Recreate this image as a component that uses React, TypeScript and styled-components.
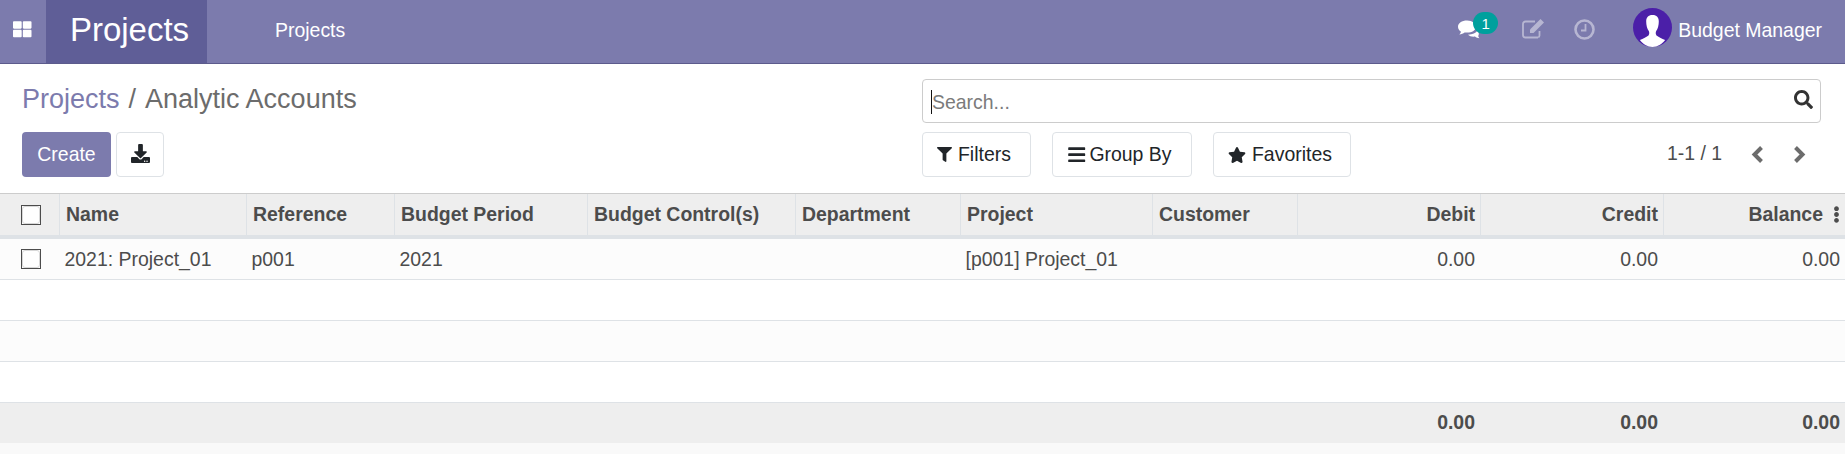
import React from "react";
import styled, { createGlobalStyle } from "styled-components";
import { FaThLarge, FaSearch, FaDownload, FaFilter, FaBars, FaStar, FaEllipsisV } from "react-icons/fa";

const Global = createGlobalStyle`
  html, body { margin: 0; padding: 0; background: #f9f9f9; }
  body { width: 1845px; height: 454px; overflow: hidden; font-family: "Liberation Sans", Arial, sans-serif; font-size: 19.44px; color: #4c4c4c; }
`;
const Navbar = styled.header`
  display: flex; align-items: stretch; height: 64px; box-sizing: border-box; background: #7c7bad; border-bottom: 1px solid #5c5b8c; color: #fff;
`;
const AppsToggle = styled.div`
  width: 46px; box-sizing: border-box; padding: 0 1px 5px 0; display: flex; align-items: center; justify-content: center; font-size: 18.5px;
`;
const Brand = styled.div`
  width: 161px; background: #5f5e97; display: flex; align-items: center; justify-content: center; font-size: 33px; padding: 0 0 3px 6px; box-sizing: border-box;
`;
const MenuItem = styled.div`
  margin-left: 68px; display: flex; align-items: center; padding-bottom: 3px;
`;
const Systray = styled.div`
  margin-left: auto; display: flex; align-items: center; padding-right: 23px;
`;
const TrayIcon = styled.span<{ $gap: number }>`
  position: relative; display: flex; margin-right: ${p => p.$gap}px; margin-bottom: 5px;
`;
const TrayGlyph = styled.svg<{ $w: number }>`
  width: ${p => p.$w}px; height: 24px; display: block;
`;
const Badge = styled.span`
  position: absolute; left: 16px; top: -5px; width: 25px; height: 22px; border-radius: 11px; background: #00a09d; color: #fff; font-size: 15px; display: flex; align-items: center; justify-content: center;
`;
const Avatar = styled.svg`
  width: 39px; height: 39px; margin-right: 6px; margin-bottom: 8px; display: block;
`;
const UserName = styled.span`
  padding-bottom: 3px;
`;
const ControlPanel = styled.section`
  display: grid; grid-template-columns: 900px 899px; padding: 15px 24px 0 22px; background: #fff; height: 130px; box-sizing: border-box; border-bottom: 1px solid #ccc;
`;
const LeftPanel = styled.div`
  display: flex; flex-direction: column;
`;
const Breadcrumb = styled.div`
  font-size: 27px; height: 40px; color: #6c6c6c; display: flex; gap: 9px; align-items: center; margin-bottom: 13px;
`;
const Crumb = styled.span`
  color: #7c7bad;
`;
const ButtonRow = styled.div`
  display: flex; gap: 5px;
`;
const PrimaryButton = styled.button`
  width: 89px; height: 45px; border: 0; border-radius: 4px; background: #7c7bad; color: #fff; font: inherit; padding: 0;
`;
const IconButton = styled.button`
  width: 48px; height: 45px; border: 1px solid #dee2e6; border-radius: 4px; background: #fff; color: #212529; font-size: 19px; padding: 0 0 2px; display: flex; align-items: center; justify-content: center;
`;
const RightPanel = styled.div`
  display: flex; flex-direction: column; gap: 9px;
`;
const SearchBox = styled.div`
  height: 44px; box-sizing: border-box; border: 1px solid #ccc; border-radius: 4px; display: flex; align-items: center; padding: 0 7px 0 8px; color: #7b7b7b; justify-content: space-between;
`;
const Caret = styled.span`
  border-left: 1px solid #111; height: 24px; margin-top: 2px; display: flex; align-items: center; white-space: nowrap; line-height: 24px;
`;
const SearchIcon = styled.span`
  color: #333; font-size: 19px; display: flex; margin-bottom: 3px;
`;
const FilterRow = styled.div`
  display: flex; align-items: center;
`;
const FilterButton = styled.button<{ $w: number; $gap: number; $left: number }>`
  width: ${p => p.$w}px; height: 45px; margin-right: 21px; border: 1px solid #dee2e6; border-radius: 4px; background: #fff; color: #212529; font: inherit; display: flex; align-items: center; gap: ${p => p.$gap}px; padding: 0 0 0 ${p => p.$left}px;
`;
const FilterGlyph = styled.span<{ $size: number }>`
  display: flex; font-size: ${p => p.$size}px;
`;
const Pager = styled.div`
  margin-left: auto; display: flex; align-items: center; padding-right: 15px; color: #4c4c4c;
`;
const PagerText = styled.span`
  margin: 0 29px 2px 0;
`;
const PagerArrow = styled.svg<{ $gap?: number }>`
  width: 13px; height: 19px; display: block; margin-left: ${p => p.$gap ?? 0}px;
`;
const Table = styled.table`
  width: 1845px; table-layout: fixed; border-collapse: separate; border-spacing: 0; background: #fff;
`;
const Th = styled.th<{ $right?: boolean }>`
  height: 45px; padding: 0 5px 0 6px; box-sizing: border-box; background: #eee; font-weight: 700; text-align: ${p => (p.$right ? "right" : "left")}; border-right: 1px solid #dee2e6; white-space: nowrap; border-bottom: 4px solid #dee2e6;
  &:last-child { border-right: 0; padding-right: 0; }
`;
const Tr = styled.tr<{ $odd?: boolean }>`
  background: ${p => (p.$odd ? "#fcfcfc" : "#fff")};
`;
const Td = styled.td<{ $right?: boolean }>`
  height: 41px; padding: 0 6px 0 4.5px; box-sizing: border-box; text-align: ${p => (p.$right ? "right" : "left")}; border-bottom: 1px solid #dee2e6; white-space: nowrap;
  &:last-child { padding-right: 5px; }
`;
const FootCell = styled.td`
  height: 40px; padding: 0 6px 2px 5px; box-sizing: border-box; background: #eee; font-weight: 700; text-align: right;
  &:last-child { padding-right: 5px; }
`;
const Check = styled.span<{ $left: number }>`
  display: block; box-sizing: border-box; width: 20px; height: 20px; margin-left: ${p => p.$left}px; border: 1px solid #4c4c4c; background: #fff;
  &::before { content: ""; display: block; width: 18px; height: 18px; box-sizing: border-box; border: 1px solid #d8d8d8; border-radius: 3px; }
`;
const CheckCell = styled.div`
  display: flex;
`;
const SortMenu = styled.span`
  display: inline-flex; margin: 0 0 0 5px; font-size: 17px; vertical-align: -2px;
`;

const widths = [60, 187, 148, 193, 208, 165, 192, 145, 183, 183, 181];
const heads = ["Name", "Reference", "Budget Period", "Budget Control(s)", "Department", "Project", "Customer"];

export default function App() {
  return (
    <>
      <Global />
      <Navbar>
        <AppsToggle><FaThLarge /></AppsToggle>
        <Brand>Projects</Brand>
        <MenuItem>Projects</MenuItem>
        <Systray>
          <TrayIcon $gap={40}>
            <TrayGlyph $w={24} viewBox="0 0 24 24">
              <path d="M10 3.500C4.800 3.500 1 6.200 1 9.800c0 2 1.200 3.700 3 4.900-.3 1-.8 2-1.700 2.800 2.200-.3 4-1 5.300-2.100.8.100 1.600.200 2.400.200 5.200 0 9-2.700 9-5.900s-3.800-6.300-9-6.200z" fill="#fff" />
              <path d="M20.500 13.500c-1.500 2.500-5 4-9.500 4.200 1.300 1.300 3.300 2 5.500 2 .5 0 1 0 1.500-.1 1.200 1 2.800 1.500 4.500 1.700-.7-.7-1.100-1.400-1.300-2.300.9-1.200 1-3.700-.7-5.500z" fill="#fff" />
            </TrayGlyph>
            <Badge>1</Badge>
          </TrayIcon>
          <TrayIcon $gap={29}>
            <TrayGlyph $w={24} viewBox="0 0 24 24" fill="none">
              <path d="M17 20.500H4.500A2.500 2.500 0 0 1 2 18V7a2.500 2.500 0 0 1 2.500-2.500H14" stroke="rgba(255,255,255,.45)" strokeWidth="1.800" />
              <path d="M18.500 14v4.500a2.500 2.500 0 0 1-1.200 2" stroke="rgba(255,255,255,.45)" strokeWidth="1.800" />
              <path d="M9 12.500 19.500 2l3.500 3.500L12.500 16H9z" fill="rgba(255,255,255,.45)" />
            </TrayGlyph>
          </TrayIcon>
          <TrayIcon $gap={38}>
            <TrayGlyph $w={21} viewBox="0 0 21 24" fill="none">
              <circle cx="10.500" cy="12.500" r="9" stroke="rgba(255,255,255,.45)" strokeWidth="2.600" />
              <path d="M11.500 7v6.500H7" stroke="rgba(255,255,255,.45)" strokeWidth="1.800" />
            </TrayGlyph>
          </TrayIcon>
          <Avatar viewBox="0 0 39 39">
            <circle cx="19.500" cy="19.500" r="19.500" fill="#4b1fa8" />
            <path d="M19.500 7c-4.300 0-6.300 2.600-6.300 6.500 0 3.800 1 7.500 2.600 9.600.6 1 .7 3.300-.3 4.300-1.500 1.500-5.500 2.900-8.600 4.600 3 4 7.500 7 12.600 7s9.600-3 12.600-7c-3.100-1.700-7.100-3.100-8.600-4.600-1-1-.9-3.300-.3-4.300 1.600-2.100 2.600-5.800 2.600-9.600 0-3.900-2-6.500-6.300-6.500z" fill="#fff" />
          </Avatar>
          <UserName>Budget Manager</UserName>
        </Systray>
      </Navbar>
      <ControlPanel>
        <LeftPanel>
          <Breadcrumb><Crumb>Projects</Crumb><span>/</span><span>Analytic Accounts</span></Breadcrumb>
          <ButtonRow>
            <PrimaryButton>Create</PrimaryButton>
            <IconButton><FaDownload /></IconButton>
          </ButtonRow>
        </LeftPanel>
        <RightPanel>
          <SearchBox><Caret>Search...</Caret><SearchIcon><FaSearch /></SearchIcon></SearchBox>
          <FilterRow>
            <FilterButton $w={109} $gap={6} $left={14}><FilterGlyph $size={15}><FaFilter /></FilterGlyph>Filters</FilterButton>
            <FilterButton $w={140} $gap={3} $left={14}><FilterGlyph $size={19.4}><FaBars /></FilterGlyph>Group By</FilterButton>
            <FilterButton $w={138} $gap={6} $left={14}><FilterGlyph $size={18}><FaStar /></FilterGlyph>Favorites</FilterButton>
            <Pager>
              <PagerText>1-1 / 1</PagerText>
              <PagerArrow viewBox="0 0 13 19"><path d="M10.500 2.500 3.500 9.500l7 7" fill="none" stroke="#6c6c6c" strokeWidth="4" /></PagerArrow>
              <PagerArrow $gap={29} viewBox="0 0 13 19"><path d="M2.500 2.500l7 7-7 7" fill="none" stroke="#6c6c6c" strokeWidth="4" /></PagerArrow>
            </Pager>
          </FilterRow>
        </RightPanel>
      </ControlPanel>
      <Table>
        <colgroup>{widths.map((w, i) => <col key={i} style={{ width: w }} />)}</colgroup>
        <thead>
          <tr>
            <Th><CheckCell><Check $left={15} /></CheckCell></Th>
            {heads.map(h => <Th key={h}>{h}</Th>)}
            <Th $right>Debit</Th>
            <Th $right>Credit</Th>
            <Th $right>Balance<SortMenu><FaEllipsisV /></SortMenu></Th>
          </tr>
        </thead>
        <tbody>
          <Tr $odd>
            <Td><CheckCell><Check $left={16.5} /></CheckCell></Td>
            <Td>2021: Project_01</Td><Td>p001</Td><Td>2021</Td><Td /><Td />
            <Td>[p001] Project_01</Td><Td />
            <Td $right>0.00</Td><Td $right>0.00</Td><Td $right>0.00</Td>
          </Tr>
          {[false, true, false].map((o, r) => (
            <Tr key={r} $odd={o}>{widths.map((_, i) => <Td key={i} />)}</Tr>
          ))}
        </tbody>
        <tfoot>
          <tr>
            <FootCell colSpan={8} />
            <FootCell>0.00</FootCell><FootCell>0.00</FootCell><FootCell>0.00</FootCell>
          </tr>
        </tfoot>
      </Table>
    </>
  );
}
